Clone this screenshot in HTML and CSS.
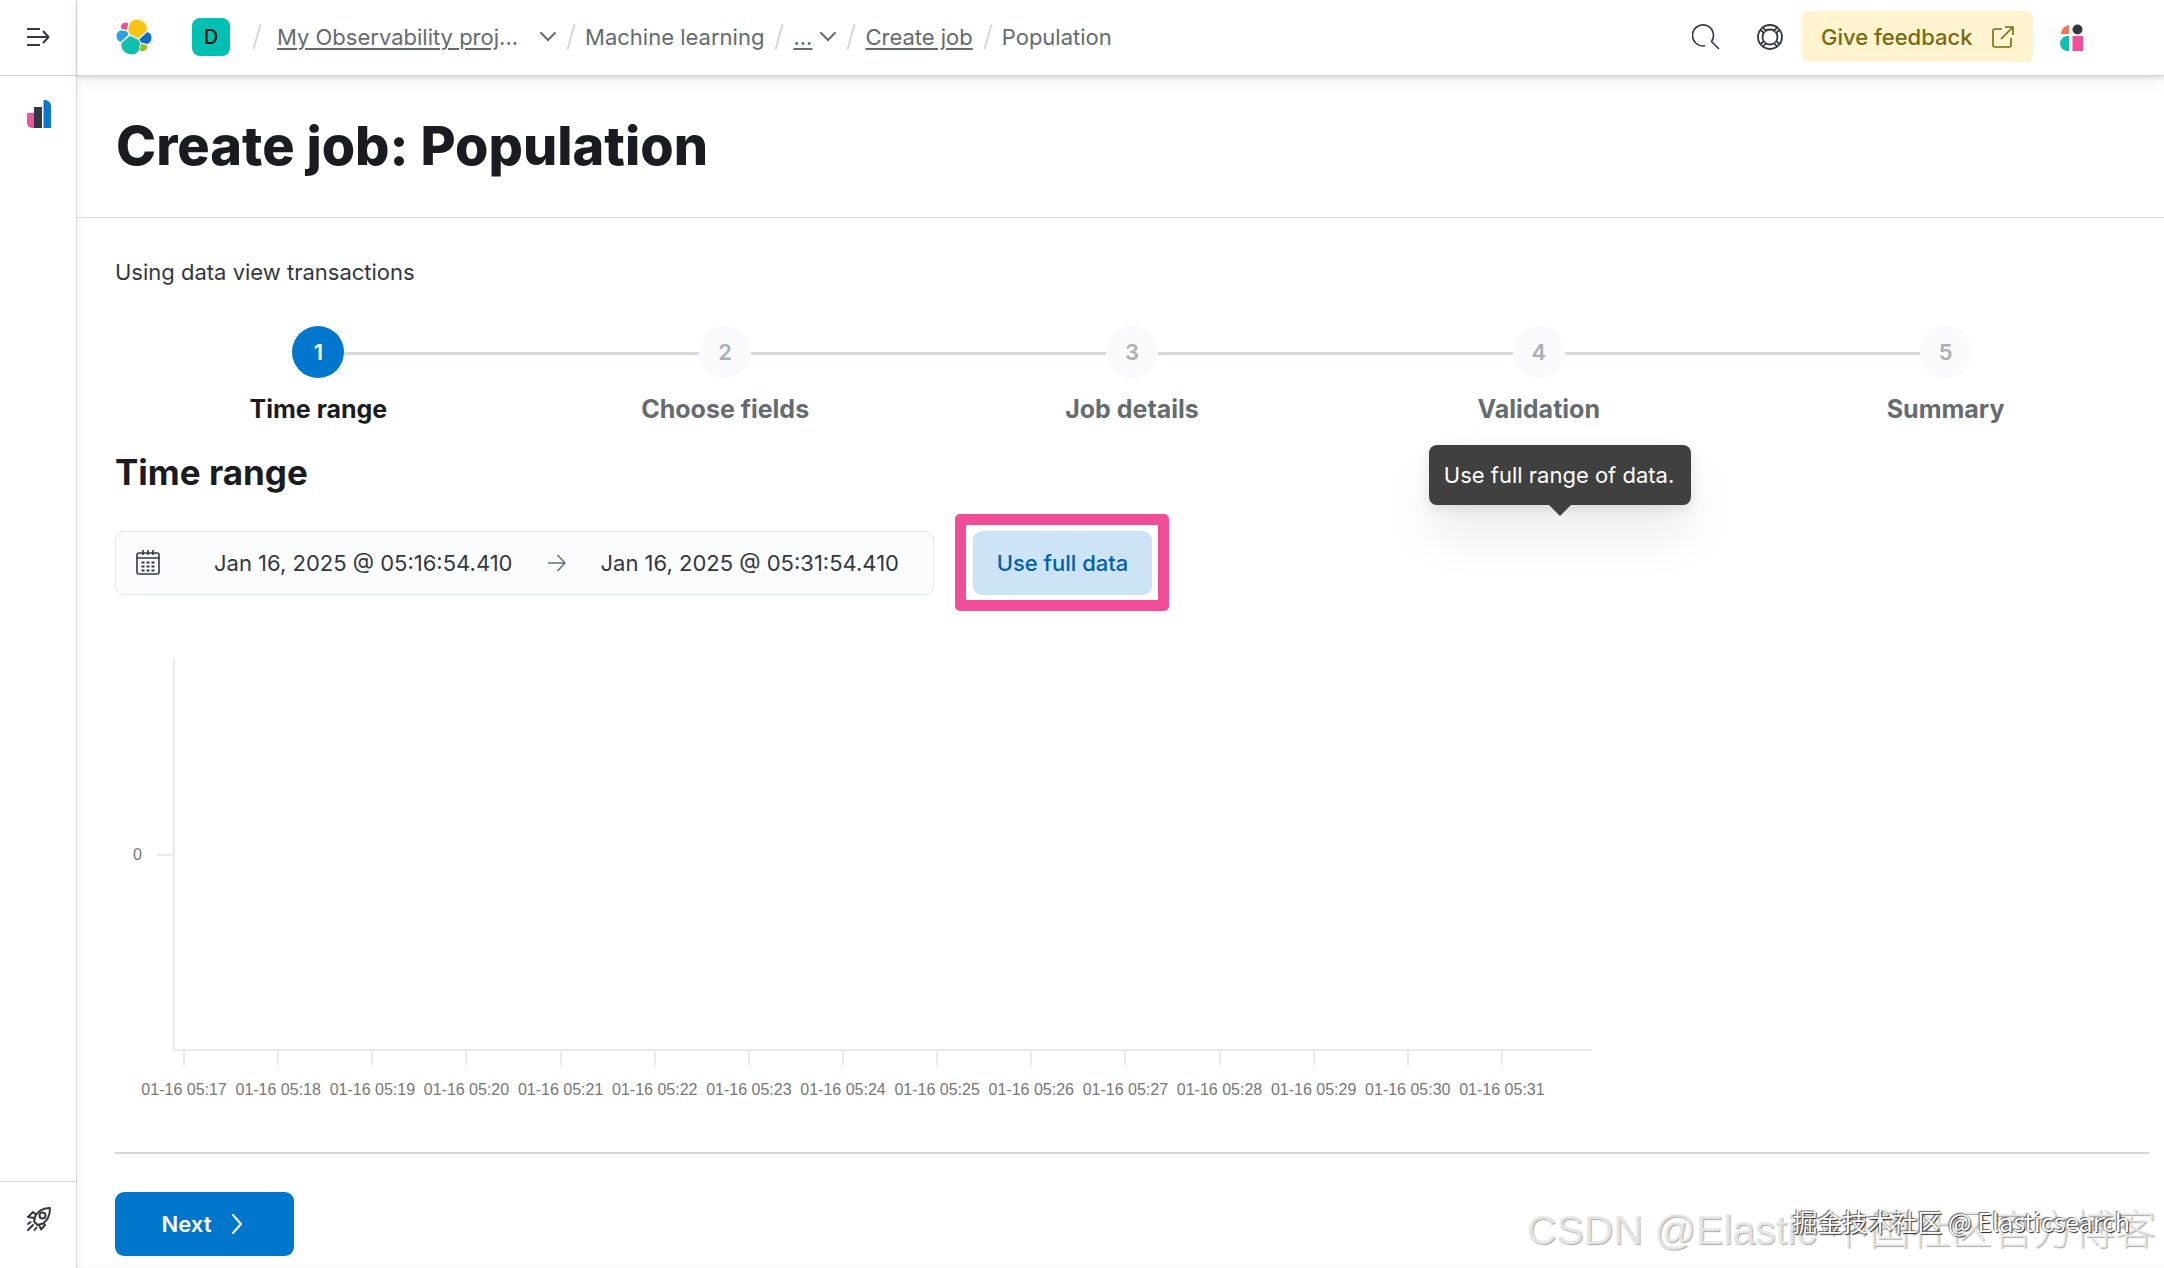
FILE: index.html
```html
<!DOCTYPE html>
<html lang="en">
<head>
<meta charset="utf-8">
<meta name="viewport" content="width=device-width, initial-scale=1">
<title>Create job: Population</title>
<link rel="stylesheet" href="styles.css">
</head>
<body>
<div class="app">
  <aside class="rail">
    <button class="rail-toggle icon-button" type="button" aria-label="Expand navigation">
      <svg width="24" height="24" viewBox="0 0 24 24" fill="none" stroke="currentColor" stroke-width="2"><path d="M1 4h13M1 12h21M1 20h13M17 6l5.500 6-5.500 6" stroke-linejoin="round"/></svg>
    </button>
    <nav class="rail-main" aria-label="Solution">
      <a href="#" aria-label="Machine learning">
        <svg width="26" height="28" viewBox="0 0 26 28"><path fill="#e9569a" d="M1 13h7v15H6a5 5 0 0 1-5-5z"/><path fill="#343741" d="M8 7h8v21H8z"/><path fill="#0b78c9" d="M17.500 0H19a6 6 0 0 1 6 6v22h-7.500z"/></svg>
      </a>
    </nav>
    <div class="rail-foot">
      <a href="#" aria-label="Get started">
        <svg width="26" height="26" viewBox="0 0 26 26" fill="none" stroke="currentColor" stroke-width="2" stroke-linejoin="round" stroke-linecap="round"><path d="M24 2c-6 0-11 2-14.500 7.500L8 15.500l3.500 3.500 5.500-1.500C22 14 24 8 24 2zM10 8.500L7 6l-5 5 6.500 1M17.500 17l1.500 2-4 4.500-2-5M2 18l2.500-2M2 24l5-5M8.500 24l2-2.500"/><circle cx="16.500" cy="9.500" r="3"/></svg>
      </a>
    </div>
  </aside>

  <div class="shell">
    <header class="topbar">
      <a class="logo" href="#" aria-label="Elastic home">
        <svg width="38" height="38" viewBox="0 0 32 32"><path fill="#f9c416" d="M12.580 13.787l7.002 3.211 7.066-6.213a7.849 7.849 0 0 0 .152-1.557A7.944 7.944 0 0 0 20.420 1.600a7.900 7.900 0 0 0-8.100 3.050l-1.175 6.115z"/><path fill="#11bfae" d="M5.333 21.228A7.964 7.964 0 0 0 11.850 30.300a7.930 7.930 0 0 0 8.200-3l1.167-6.101-1.557-2.985-7.030-3.211z"/><path fill="#e0569a" d="M5.288 9.067l4.800 1.137L11.140 4.730a3.785 3.785 0 0 0-5.850 4.337z"/><path fill="#2ba0e4" d="M4.872 10.214a5.294 5.294 0 0 0-.2 9.957l6.733-6.102-1.236-2.650z"/><path fill="#8fc31f" d="M20.873 27.184a3.777 3.777 0 0 0 5.825-4.324l-4.794-1.124z"/><path fill="#0d6fc4" d="M21.848 20.563l5.280 1.236a5.294 5.294 0 0 0 .201-9.957l-6.917 6.071z"/></svg>
      </a>
      <button class="space-avatar" type="button" aria-label="Default space">D</button>
      <nav class="crumbs" aria-label="Breadcrumb">
        <ol>
          <li>
            <a class="project" href="#"><u>My Observability proj</u>...</a>
            <button class="caret" type="button" aria-label="Switch project"><svg width="16" height="16" viewBox="0 0 16 16" fill="none" stroke="currentColor" stroke-width="2" stroke-linecap="round"><path d="M1 4l7 7 7-7"/></svg></button>
          </li>
          <li><span>Machine learning</span></li>
          <li>
            <a class="more" href="#"><u>...</u></a>
            <button class="caret" type="button" aria-label="Show hidden breadcrumbs"><svg width="16" height="16" viewBox="0 0 16 16" fill="none" stroke="currentColor" stroke-width="2" stroke-linecap="round"><path d="M1 4l7 7 7-7"/></svg></button>
          </li>
          <li><a href="#"><u>Create job</u></a></li>
          <li><span aria-current="page">Population</span></li>
        </ol>
      </nav>
      <div class="tools">
        <button class="icon-button" type="button" aria-label="Search">
          <svg width="28" height="28" viewBox="0 0 28 28" fill="none" stroke="currentColor" stroke-width="1.600" stroke-linecap="round"><path d="M12.500 22.800A10.500 10.500 0 1 1 19.500 18.500L26.500 25.500"/></svg>
        </button>
        <button class="icon-button" type="button" aria-label="Help">
          <svg width="28" height="28" viewBox="0 0 28 28" fill="none" stroke="currentColor" stroke-width="1.800"><circle cx="14" cy="14" r="12"/><circle cx="14" cy="14" r="7.500"/><path stroke-width="5" d="M5.500 5.500l3.500 3.500M22.500 5.500L19 9M5.500 22.500L9 19M22.500 22.500L19 19"/><path stroke="#fff" stroke-width="1.200" d="M6 6l2.500 2.500M22 6l-2.500 2.500M6 22l2.500-2.500M22 22l-2.500-2.500"/></svg>
        </button>
        <a class="feedback" href="#">Give feedback
          <svg width="24" height="24" viewBox="0 0 24 24" fill="none" stroke="currentColor" stroke-width="1.600"><path d="M11 4H4a2 2 0 0 0-2 2v14a2 2 0 0 0 2 2h14a2 2 0 0 0 2-2v-7M14 2h8v8M22 2L10 14"/></svg>
        </a>
        <button class="icon-button" type="button" aria-label="Assistant">
          <svg width="28" height="28" viewBox="0 0 28 28"><path fill="#f0744f" d="M12 2v9H4a9 9 0 0 1 8-9z"/><circle cx="20.500" cy="6.500" r="5" fill="#343741"/><path fill="#10bfae" d="M12 13v15h-1.500a7.500 7.500 0 0 1 0-15z"/><path fill="#f04e98" d="M15.500 13H26v15H15.500z"/></svg>
        </button>
      </div>
    </header>

    <main class="page">
      <div class="page-title"><h1>Create job: Population</h1></div>
      <div class="page-body">
        <p class="source">Using data view transactions</p>
        <ol class="steps">
          <li class="step current" aria-current="step"><span class="dot">1</span><span class="name">Time range</span></li>
          <li class="step"><span class="dot">2</span><span class="name">Choose fields</span></li>
          <li class="step"><span class="dot">3</span><span class="name">Job details</span></li>
          <li class="step"><span class="dot">4</span><span class="name">Validation</span>
            <span class="tooltip" role="tooltip">Use full range of data.</span></li>
          <li class="step"><span class="dot">5</span><span class="name">Summary</span></li>
        </ol>

        <h2>Time range</h2>
        <div class="range-row">
          <div class="range">
            <svg class="calendar" width="26" height="26" viewBox="0 0 26 26" fill="none" stroke="currentColor" stroke-width="1.600"><rect x="2" y="3" width="22" height="21" rx="2"/><path d="M2 8h22M8 0v5M13 0v5M18 0v5"/><path stroke-width="2" stroke-dasharray="3 2" d="M6.500 12.500h13M6.500 16.500h13M6.500 20.500h13"/></svg>
            <button class="date" type="button">Jan 16, 2025 @ 05:16:54.410</button>
            <svg class="arrow" width="20" height="20" viewBox="0 0 20 20" fill="none" stroke="currentColor" stroke-width="1.600"><path d="M1 10h17M10.500 2l7.500 8-7.500 8" stroke-linejoin="round"/></svg>
            <button class="date" type="button">Jan 16, 2025 @ 05:31:54.410</button>
          </div>
          <div class="highlight"><button class="full-data" type="button">Use full data</button></div>
        </div>

        <section class="chart" aria-label="Event rate">
          <div class="y-axis"><span>0</span></div>
          <div class="plot"></div>
          <ol class="x-axis">
            <li>01-16 05:17</li><li>01-16 05:18</li><li>01-16 05:19</li><li>01-16 05:20</li><li>01-16 05:21</li>
            <li>01-16 05:22</li><li>01-16 05:23</li><li>01-16 05:24</li><li>01-16 05:25</li><li>01-16 05:26</li>
            <li>01-16 05:27</li><li>01-16 05:28</li><li>01-16 05:29</li><li>01-16 05:30</li><li>01-16 05:31</li>
          </ol>
        </section>

        <hr>
        <button class="next" type="button">Next
          <svg width="12" height="20" viewBox="0 0 12 20" fill="none" stroke="currentColor" stroke-width="2" stroke-linecap="round" stroke-linejoin="round"><path d="M2 1l8 9-8 9"/></svg>
        </button>
      </div>
    </main>
  </div>
</div>
<p class="mark mark-large">CSDN @Elastic 中国社区官方博客</p>
<p class="mark mark-small">掘金技术社区 @ Elasticsearch</p>
</body>
</html>
```
FILE: styles.css
```css
* { box-sizing: border-box; }

body {
  margin: 0;
  position: relative;
  background: #fff;
  color: #343741;
  font-family: Inter, "Liberation Sans", sans-serif;
  font-size: 22px;
  line-height: 32px;
}

h1, h2, p, ol { margin: 0; padding: 0; }
ol { list-style: none; }
a { color: inherit; text-decoration: none; }
svg { display: block; flex: none; }

button {
  margin: 0;
  padding: 0;
  border: 0;
  background: none;
  color: inherit;
  font: inherit;
  cursor: pointer;
}

.app { display: flex; min-height: 100vh; }

/* Collapsed side navigation */
.rail {
  flex: none;
  display: flex;
  flex-direction: column;
  width: 77px;
  border-right: 1px solid #d6d8da;
}
.rail-toggle {
  height: 76px;
  padding: 0 0 2px 26px;
  border-bottom: 1px solid #d0d2d4;
}
.rail-main { flex: 1; padding: 24px 26px; }
.rail-foot {
  height: 87px;
  padding: 24px 26px;
  border-top: 1px solid #d6d8da;
}

.shell { flex: 1; min-width: 0; display: flex; flex-direction: column; }

/* Top bar */
.topbar {
  display: flex;
  align-items: center;
  height: 76px;
  padding: 0 79px 2px 38px;
  border-bottom: 1px solid #d0d2d4;
  box-shadow: 0 2px 4px rgba(0, 0, 0, .1), 0 6px 16px rgba(0, 0, 0, .05);
}
.space-avatar {
  width: 38px;
  height: 38px;
  margin-left: 39px;
  border-radius: 8px;
  background: #00bfb3;
  color: #111;
  font-size: 20px;
  font-weight: 500;
}
.crumbs { margin-left: 22px; color: #646a70; }
.crumbs ol, .crumbs li { display: flex; align-items: center; }
.crumbs li::before {
  content: "";
  width: 2px;
  height: 26px;
  margin: 0 13px 0 14px;
  background: #d5d7da;
  transform: rotate(16deg);
}
.crumbs li:first-child::before { margin: 0 19px 0 4px; }
.crumbs li { white-space: nowrap; }
.crumbs u { text-underline-offset: 3px; text-decoration-thickness: 2px; }
.caret { margin-left: 8px; }
.project + .caret { margin-left: 22px; }
.icon-button { display: flex; align-items: center; }

.tools { display: flex; align-items: center; margin-left: auto; }
.tools .icon-button + .icon-button { margin-left: 36px; }
.feedback {
  display: flex;
  align-items: center;
  justify-content: space-between;
  width: 231px;
  height: 51px;
  margin: 0 0 0 18px;
  padding: 0 18px 0 19px;
  border-radius: 6px;
  background: #fff3d0;
  color: #776a10;
  font-weight: 500;
}
.feedback + .icon-button { margin-left: 24px; }

/* Page */
.page { flex: 1; box-shadow: inset 4px 0 8px -4px rgba(0, 0, 0, .08); }
.page-title {
  padding: 34px 39px 35px;
  border-bottom: 1px solid #d6d8da;
}
h1 {
  color: #1a1c21;
  font-size: 54px;
  line-height: 72px;
  font-weight: 800;
}
.page-body { padding: 38px 15px 12px 38px; }

.steps {
  display: grid;
  grid-template-columns: repeat(5, 1fr);
  margin-top: 38px;
}
.step {
  position: relative;
  display: flex;
  flex-direction: column;
  align-items: center;
  gap: 15px;
  color: #666b70;
}
.step + .step::before {
  content: "";
  position: absolute;
  top: 26px;
  left: calc(-50% + 26px);
  width: calc(100% - 52px);
  height: 3px;
  background: #d5d9e2;
}
.dot {
  width: 52px;
  height: 52px;
  border-radius: 50%;
  background: #fafafc;
  color: #abb0b7;
  font-weight: 600;
  line-height: 52px;
  text-align: center;
}
.current .dot { background: #0077cc; color: #fff; }
.name { font-size: 25px; font-weight: 700; }
.current .name { color: #1a1c21; }

.tooltip {
  position: absolute;
  top: 119px;
  left: 50%;
  z-index: 2;
  margin-left: -110px;
  padding: 14px 17px 14px 15px;
  border-radius: 8px;
  background: #404040;
  color: #fff;
  white-space: nowrap;
  box-shadow: 0 4px 12px rgba(0, 0, 0, .1), 0 30px 50px rgba(0, 0, 0, .08);
}
.tooltip::after {
  content: "";
  position: absolute;
  top: 100%;
  left: 50%;
  margin-left: -11px;
  border: 11px solid transparent;
  border-top-color: #404040;
  border-bottom: 0;
}

h2 {
  margin-top: 25px;
  color: #1a1c21;
  font-size: 35px;
  line-height: 44px;
  font-weight: 700;
}

.range-row { display: flex; align-items: center; margin-top: 20px; }
.range {
  display: flex;
  align-items: center;
  width: 819px;
  height: 64px;
  border: 1px solid #e6e9ee;
  border-radius: 9px;
  background: #fbfcfd;
}
.calendar { margin-left: 19px; }
.date { flex: 1; text-align: center; white-space: nowrap; }
.calendar + .date { margin-left: 19px; }
.arrow { color: #69707d; }
.highlight {
  margin-left: 21px;
  padding: 6px 6px 5px 7px;
  border: 11px solid #f04e98;
  border-radius: 5px;
}
.full-data {
  display: block;
  width: 179px;
  height: 64px;
  border-radius: 9px;
  background: #cce4f5;
  color: #0061a6;
  font-weight: 500;
}

/* Empty event-rate chart */
.chart {
  display: grid;
  grid-template-columns: 58px 1fr;
  max-width: 1477px;
  margin-top: 48px;
  color: #777;
  font-family: "Liberation Sans", Arial, sans-serif;
  font-size: 16px;
  line-height: 20px;
}
.y-axis {
  display: flex;
  align-items: center;
  justify-content: flex-end;
}
.y-axis::after {
  content: "";
  width: 16px;
  height: 2px;
  margin-left: 15px;
  background: #eaeaea;
}
.plot {
  height: 392px;
  border: solid #eaeaea;
  border-width: 0 0 2px 2px;
}
.x-axis {
  grid-column: 1 / -1;
  display: grid;
  grid-template-columns: repeat(15, 1fr);
  margin: 0 43px 0 22px;
}
.x-axis li {
  display: flex;
  flex-direction: column;
  align-items: center;
  gap: 15px;
  white-space: nowrap;
}
.x-axis li::before {
  content: "";
  width: 2px;
  height: 14px;
  background: #eaeaea;
}

hr {
  height: 2px;
  margin: 52px 0 38px;
  border: 0;
  background: #d3d7dc;
}
.next {
  display: flex;
  align-items: center;
  justify-content: center;
  gap: 20px;
  width: 179px;
  height: 64px;
  padding-right: 4px;
  border-radius: 9px;
  background: #0077cc;
  color: #fff;
  font-weight: 600;
}

/* Watermarks laid over the corner of the page */
.mark { position: absolute; white-space: nowrap; pointer-events: none; }
.mark-large {
  right: 8px;
  bottom: 14px;
  color: rgba(236, 236, 236, .9);
  font: 300 41px/48px "Liberation Sans", "Noto Sans CJK SC", sans-serif;
  text-shadow: 1px 1px 1px #aaa;
}
.mark-small {
  right: 34px;
  bottom: 31px;
  color: #fff;
  font: 400 25px/32px "Noto Sans CJK SC", sans-serif;
  text-shadow: 1px 1px 1px #222, -1px -1px 1px #666;
}
```
